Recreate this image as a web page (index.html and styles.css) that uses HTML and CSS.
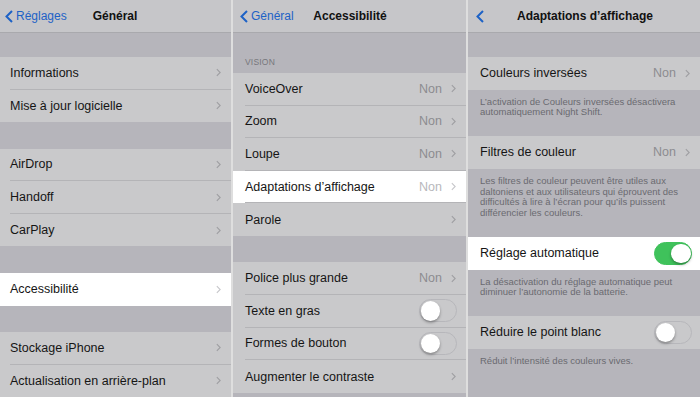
FILE: index.html
```html
<!DOCTYPE html>
<html lang="fr">

<head>
    <meta charset="UTF-8">
    <meta name="viewport" content="width=device-width, initial-scale=1.0">
    <title>Adaptations d'affichage</title>
    <link rel="stylesheet" href="styles.css">
</head>

<body>
    <div class="screens">
        <!-- Général -->
        <section class="screen screen-1">
            <header class="nav">
                <a href="#" class="back"><svg class="back-chev" viewBox="0 0 8 13"><path d="M7 1L1.5 6.5 7 12"/></svg>Réglages</a>
                <h1>Général</h1>
                <span></span>
            </header>
            <div class="spacer"></div>
            <ul class="group">
                <li class="row"><div class="cell"><span class="label">Informations</span><svg class="chev" viewBox="0 0 6 10"><path d="M1 1l4 4-4 4"/></svg></div></li>
                <li class="row"><div class="cell"><span class="label">Mise à jour logicielle</span><svg class="chev" viewBox="0 0 6 10"><path d="M1 1l4 4-4 4"/></svg></div></li>
            </ul>
            <div class="spacer-lg"></div>
            <ul class="group">
                <li class="row"><div class="cell"><span class="label">AirDrop</span><svg class="chev" viewBox="0 0 6 10"><path d="M1 1l4 4-4 4"/></svg></div></li>
                <li class="row"><div class="cell"><span class="label">Handoff</span><svg class="chev" viewBox="0 0 6 10"><path d="M1 1l4 4-4 4"/></svg></div></li>
                <li class="row"><div class="cell"><span class="label">CarPlay</span><svg class="chev" viewBox="0 0 6 10"><path d="M1 1l4 4-4 4"/></svg></div></li>
            </ul>
            <div class="spacer-lg"></div>
            <ul class="group">
                <li class="row lit"><div class="cell"><span class="label">Accessibilité</span><svg class="chev" viewBox="0 0 6 10"><path d="M1 1l4 4-4 4"/></svg></div></li>
            </ul>
            <div class="spacer-lg"></div>
            <ul class="group">
                <li class="row"><div class="cell"><span class="label">Stockage iPhone</span><svg class="chev" viewBox="0 0 6 10"><path d="M1 1l4 4-4 4"/></svg></div></li>
                <li class="row"><div class="cell"><span class="label">Actualisation en arrière-plan</span><svg class="chev" viewBox="0 0 6 10"><path d="M1 1l4 4-4 4"/></svg></div></li>
            </ul>
        </section>

        <!-- Accessibilité -->
        <section class="screen screen-2">
            <header class="nav">
                <a href="#" class="back"><svg class="back-chev" viewBox="0 0 8 13"><path d="M7 1L1.5 6.5 7 12"/></svg>Général</a>
                <h1>Accessibilité</h1>
                <span></span>
            </header>
            <div class="section-title">VISION</div>
            <ul class="group">
                <li class="row"><div class="cell"><span class="label">VoiceOver</span><span class="value">Non</span><svg class="chev" viewBox="0 0 6 10"><path d="M1 1l4 4-4 4"/></svg></div></li>
                <li class="row"><div class="cell"><span class="label">Zoom</span><span class="value">Non</span><svg class="chev" viewBox="0 0 6 10"><path d="M1 1l4 4-4 4"/></svg></div></li>
                <li class="row"><div class="cell"><span class="label">Loupe</span><span class="value">Non</span><svg class="chev" viewBox="0 0 6 10"><path d="M1 1l4 4-4 4"/></svg></div></li>
                <li class="row lit"><div class="cell"><span class="label">Adaptations d’affichage</span><span class="value">Non</span><svg class="chev" viewBox="0 0 6 10"><path d="M1 1l4 4-4 4"/></svg></div></li>
                <li class="row"><div class="cell"><span class="label">Parole</span><svg class="chev" viewBox="0 0 6 10"><path d="M1 1l4 4-4 4"/></svg></div></li>
            </ul>
            <div class="spacer-lg"></div>
            <ul class="group">
                <li class="row"><div class="cell"><span class="label">Police plus grande</span><span class="value">Non</span><svg class="chev" viewBox="0 0 6 10"><path d="M1 1l4 4-4 4"/></svg></div></li>
                <li class="row"><div class="cell toggle-cell"><span class="label">Texte en gras</span><span class="switch"><span class="knob"></span></span></div></li>
                <li class="row"><div class="cell toggle-cell"><span class="label">Formes de bouton</span><span class="switch"><span class="knob"></span></span></div></li>
                <li class="row"><div class="cell"><span class="label">Augmenter le contraste</span><svg class="chev" viewBox="0 0 6 10"><path d="M1 1l4 4-4 4"/></svg></div></li>
            </ul>
        </section>

        <!-- Adaptations d'affichage -->
        <section class="screen screen-3">
            <header class="nav">
                <a href="#" class="back"><svg class="back-chev" viewBox="0 0 8 13"><path d="M7 1L1.5 6.5 7 12"/></svg></a>
                <h1>Adaptations d’affichage</h1>
                <span></span>
            </header>
            <div class="spacer"></div>
            <ul class="group">
                <li class="row"><div class="cell"><span class="label">Couleurs inversées</span><span class="value">Non</span><svg class="chev" viewBox="0 0 6 10"><path d="M1 1l4 4-4 4"/></svg></div></li>
            </ul>
            <p class="note">L’activation de Couleurs inversées désactivera<br>automatiquement Night Shift.</p>
            <ul class="group">
                <li class="row"><div class="cell"><span class="label">Filtres de couleur</span><span class="value">Non</span><svg class="chev" viewBox="0 0 6 10"><path d="M1 1l4 4-4 4"/></svg></div></li>
            </ul>
            <p class="note">Les filtres de couleur peuvent être utiles aux<br>daltoniens et aux utilisateurs qui éprouvent des<br>difficultés à lire à l’écran pour qu’ils puissent<br>différencier les couleurs.</p>
            <ul class="group">
                <li class="row lit"><div class="cell toggle-cell"><span class="label">Réglage automatique</span><span class="switch on"><span class="knob"></span></span></div></li>
            </ul>
            <p class="note">La désactivation du réglage automatique peut<br>diminuer l’autonomie de la batterie.</p>
            <ul class="group">
                <li class="row"><div class="cell toggle-cell"><span class="label">Réduire le point blanc</span><span class="switch"><span class="knob"></span></span></div></li>
            </ul>
            <p class="note">Réduit l’intensité des couleurs vives.</p>
        </section>
    </div>
</body>

</html>
```

FILE: styles.css
```css
* {
    margin: 0;
    padding: 0;
    box-sizing: border-box;
}

a {
    text-decoration: none;
}

li {
    list-style: none;
}

body {
    width: 700px;
    height: 397px;
    overflow: hidden;
    background-color: #dedede;
    font-family: "Liberation Sans", Arial, sans-serif;
    color: #151515;
}

.screens {
    display: grid;
    grid-template-columns: 231px 233px 232px;
    column-gap: 2px;
    height: 397px;
}

.screen {
    background-color: #b6b5bb;
    overflow: hidden;
}

/* barre de navigation */
.nav {
    display: grid;
    grid-template-columns: 1fr auto 1fr;
    align-items: center;
    height: 33px;
    padding: 0 6px 0 5px;
    background-color: #c6c6c9;
    border-bottom: 1px solid #a9a9ad;
}

.nav h1 {
    font-size: 12px;
    font-weight: bold;
    color: #111;
}

.back {
    display: flex;
    align-items: center;
    gap: 3px;
    font-size: 12px;
    color: #1d62c6;
}

.back-chev {
    width: 8px;
    height: 13px;
    fill: none;
    stroke: #1d62c6;
    stroke-width: 2;
}

.screen-2 .nav {
    padding-left: 7px;
}

.screen-3 .nav {
    padding-left: 8px;
}

.spacer {
    height: 24px;
}

.spacer-lg {
    height: 26.5px;
}

.section-title {
    display: flex;
    align-items: flex-end;
    height: 40px;
    padding: 0 12px 6px;
    font-size: 8.5px;
    letter-spacing: 0.2px;
    color: #77777c;
}

/* lignes */
.group {
    background-color: #c9c9cb;
}

.row {
    height: 32.6px;
    padding-left: 12px;
    font-size: 12.5px;
}

.screen-1 .row {
    padding-left: 10px;
}

.cell {
    display: flex;
    align-items: center;
    gap: 9px;
    height: 100%;
    padding-right: 10px;
    border-bottom: 1px solid #b4b4b7;
}

.row:last-child .cell {
    border-bottom: none;
}

.label {
    flex: 1;
    white-space: nowrap;
}

.value {
    color: #8c8c90;
}

.chev {
    width: 5px;
    height: 9px;
    fill: none;
    stroke: #9e9ea2;
    stroke-width: 1.3;
}

.row.lit {
    background-color: #fff;
}

.row.lit .value {
    color: #b8b8bc;
}

.row.lit .chev {
    stroke: #c6c6ca;
}

/* interrupteurs */
.toggle-cell {
    padding-right: 9px;
}

.screen-3 .toggle-cell {
    padding-right: 8px;
}

.switch {
    display: flex;
    align-items: center;
    width: 38px;
    height: 23px;
    padding: 0.5px;
    border-radius: 12px;
    border: 1.5px solid #b7b7bb;
}

.knob {
    width: 19.5px;
    height: 19.5px;
    border-radius: 50%;
    background-color: #fff;
    box-shadow: 0 1.5px 3px rgba(0, 0, 0, 0.35);
}

.switch.on {
    justify-content: flex-end;
    background-color: #3fc25b;
    border-color: #3fc25b;
}

/* notes de bas de groupe */
.note {
    padding: 7px 12px 18px;
    font-size: 9.5px;
    line-height: 10.8px;
    color: #6a6a70;
    white-space: nowrap;
}
```
